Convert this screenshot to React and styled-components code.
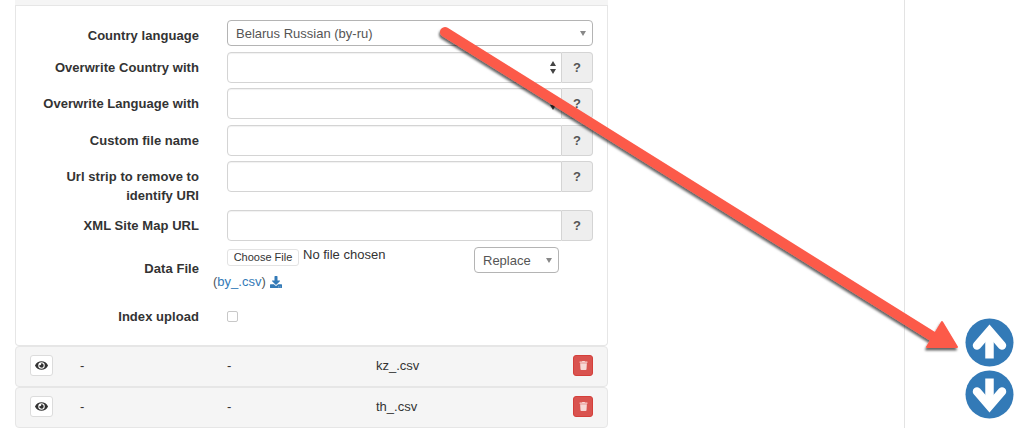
import React from 'react';
import styled, { createGlobalStyle } from 'styled-components';
import { FaEye, FaTrash, FaDownload } from 'react-icons/fa';

const Global = createGlobalStyle`
    html, body { margin: 0; padding: 0; background: #fff; }
    body { font-family: "Liberation Sans", Arial, sans-serif; font-size: 13px; color: #333; }
`;

const Page = styled.div`
    position: relative;
    width: 1024px;
    height: 428px;
    overflow: hidden;
    display: flex;
    padding-left: 15px;
    box-sizing: border-box;
`;

const Main = styled.div`
    width: 593px;
    flex: none;
`;

const Panel = styled.div`
    box-sizing: border-box;
    height: 340px;
    border: 1px solid #e6e6e6;
    border-top: none;
    border-radius: 0 0 4px 4px;
`;

const PanelHead = styled.div`
    height: 5px;
    background: #f5f5f5;
    border-bottom: 1px solid #e6e6e6;
`;

const Form = styled.div`
    display: flex;
    flex-direction: column;
    padding: 14px 14px 0 0;
`;

const Row = styled.div`
    display: grid;
    grid-template-columns: 183px 366px;
    column-gap: 28px;
    align-items: ${p => (p.$top ? 'start' : 'center')};
    margin-bottom: ${p => p.$gap || 5.5}px;
`;

const Label = styled.label`
    font-weight: 700;
    font-size: 13px;
    letter-spacing: 0.05px;
    line-height: 19px;
    text-align: right;
    color: #333;
    padding-top: ${p => p.$down || 0}px;
    padding-bottom: ${p => p.$up || 0}px;
    padding-left: ${p => p.$inset || 0}px;
`;

const SelectWrap = styled.div`
    position: relative;
    width: ${p => p.$width || '100%'};
`;

const Select = styled.select`
    appearance: none;
    display: block;
    box-sizing: border-box;
    width: 100%;
    height: 26px;
    padding: 0 8px;
    background: #fff;
    border: 1px solid #b4b4b4;
    border-radius: 4px;
    font: 13px "Liberation Sans", Arial, sans-serif;
    color: #555;
`;

const Caret = styled.span`
    position: absolute;
    right: 7px;
    top: 11px;
    border-left: 3.5px solid transparent;
    border-right: 3.5px solid transparent;
    border-top: 5px solid #888;
`;

const Group = styled.div`
    display: flex;
    height: 31px;
`;

const InputBox = styled.div`
    position: relative;
    flex: 1;
`;

const Input = styled.input`
    display: block;
    box-sizing: border-box;
    width: 100%;
    height: 31px;
    border: 1px solid #d4d4d4;
    border-radius: 4px 0 0 4px;
    background: #fff;
    box-shadow: inset 0 1px 1px rgba(0, 0, 0, 0.06);
    outline: none;
`;

const Spinner = styled.svg`
    position: absolute;
    right: 5px;
    top: 8px;
`;

const Help = styled.div`
    width: 31px;
    box-sizing: border-box;
    display: flex;
    align-items: center;
    justify-content: center;
    background: #eee;
    border: 1px solid #d4d4d4;
    border-left: none;
    border-radius: 0 4px 4px 0;
    font-weight: 700;
    font-size: 13px;
    color: #555;
`;

const FileCell = styled.div`
    display: grid;
    grid-template-columns: 1fr 85px;
    margin-left: -14px;
    padding-right: 34px;
`;

const FileLine = styled.div`
    display: flex;
    align-items: flex-start;
    padding-left: 14px;
`;

const FileButton = styled.div`
    box-sizing: border-box;
    width: 72px;
    height: 17px;
    margin-top: 2px;
    border: 1px solid #e3e3e3;
    border-radius: 3px;
    background: #fff;
    font-size: 11px;
    line-height: 15px;
    text-align: center;
    color: #333;
`;

const NoFile = styled.span`
    margin-left: 4px;
    font-size: 13px;
    line-height: 15px;
    color: #333;
`;

const DataLink = styled.div`
    grid-column: 1 / span 2;
    margin-top: -1px;
    font-size: 13px;
    line-height: 19px;
    color: #555;
    display: flex;
    align-items: center;
`;

const LinkText = styled.a`
    color: #337ab7;
    text-decoration: none;
`;

const Download = styled(FaDownload)`
    margin-left: 4px;
    font-size: 12px;
    color: #337ab7;
`;

const Check = styled.input`
    appearance: none;
    display: block;
    box-sizing: border-box;
    margin: 0;
    width: 11px;
    height: 11px;
    background: #fff;
    border: 1px solid #c8c8c8;
    border-radius: 2px;
`;

const ListRow = styled.div`
    box-sizing: border-box;
    height: 41px;
    display: grid;
    grid-template-columns: 50px 147px 149px 1fr auto;
    align-items: center;
    padding: 0 14px 2px;
    background: #f5f5f5;
    border: 1px solid #e6e6e6;
    border-radius: 4px;
    font-size: 13px;
    color: #333;
`;

const EyeButton = styled.button`
    box-sizing: border-box;
    width: 23px;
    height: 21px;
    padding: 0;
    display: flex;
    align-items: center;
    justify-content: center;
    background: #fff;
    border: 1px solid #dcdcdc;
    border-radius: 3px;
    color: #333;
    font-size: 13px;
`;

const TrashButton = styled.button`
    box-sizing: border-box;
    width: 20px;
    height: 21px;
    padding: 0;
    display: flex;
    align-items: center;
    justify-content: center;
    background: #d9534f;
    border: 1px solid #d43f3a;
    border-radius: 3px;
    color: #f7d8d6;
    font-size: 9px;
`;

const Rail = styled.div`
    box-sizing: border-box;
    flex: none;
    width: 120px;
    margin-left: 296px;
    height: 428px;
    border-left: 1px solid #e3e3e3;
    display: flex;
    flex-direction: column;
    align-items: flex-end;
    padding: 318px 10px 0 0;
    gap: 3px;
`;

const Overlay = styled.svg`
    position: absolute;
    left: 0;
    top: 0;
    pointer-events: none;
`;

const CircleIcon = styled.svg`
    display: block;
    width: 49px;
    height: 49px;
`;

// the arrow is drawn pointing up, the down one is the same drawing turned round
const MoveIcon = ({ down }) => (
    <CircleIcon viewBox="-24.5 -24.5 49 49">
        <circle r="24" fill="#337ab7" />
        <g transform={down ? 'rotate(180)' : undefined} fill="none" stroke="#fff" strokeWidth="8.5">
            <path d="M0 16 V-11" />
            <path d="M-12.5 3 L0 -11.5 L12.5 3" strokeLinejoin="miter" strokeLinecap="round" />
        </g>
    </CircleIcon>
);

const Arrow = () => (
    <Overlay width="1024" height="428" viewBox="0 0 1024 428">
        <defs>
            <filter id="sh" x="-5%" y="-5%" width="110%" height="110%">
                <feDropShadow dx="-1" dy="2.5" stdDeviation="1" floodColor="#000" floodOpacity="0.6" />
            </filter>
        </defs>
        <g filter="url(#sh)" fill="#fc5a4a" stroke="#fc5a4a" strokeLinejoin="round">
            <path d="M445 32 L940 341" fill="none" strokeWidth="10" strokeLinecap="round" />
            <path d="M942 322 L957 347 L927 347 Z" strokeWidth="2" />
        </g>
    </Overlay>
);

const Spin = () => (
    <Spinner width="8" height="16" viewBox="0 0 8 16">
        <path d="M4 1 L7 6 L1 6 Z M1 9 L7 9 L4 14 Z" fill="#444" />
    </Spinner>
);

const fields = [
    { label: 'Overwrite Country with', spin: true },
    { label: 'Overwrite Language with', spin: true },
    { label: 'Custom file name' },
];

const FieldGroup = ({ spin }) => (
    <Group>
        <InputBox>
            <Input />
            {spin ? <Spin /> : null}
        </InputBox>
        <Help>?</Help>
    </Group>
);

const files = ['kz_.csv', 'th_.csv'];

export default function App() {
    return (
        <Page>
            <Global />
            <Main>
                <PanelHead />
                <Panel>
                    <Form>
                        <Row>
                            <Label $down={4}>Country language</Label>
                            <SelectWrap>
                                <Select defaultValue="by-ru">
                                    <option value="by-ru">Belarus Russian (by-ru)</option>
                                </Select>
                                <Caret />
                            </SelectWrap>
                        </Row>
                        {fields.map(f => (
                            <Row key={f.label}>
                                <Label>{f.label}</Label>
                                <FieldGroup spin={f.spin} />
                            </Row>
                        ))}
                        <Row $top $gap={5}>
                            <Label $down={6} $inset={40}>Url strip to remove to identify URI</Label>
                            <FieldGroup />
                        </Row>
                        <Row $gap={6}>
                            <Label>XML Site Map URL</Label>
                            <FieldGroup />
                        </Row>
                        <Row $gap={16}>
                            <Label $up={2}>Data File</Label>
                            <FileCell>
                                <FileLine>
                                    <FileButton>Choose File</FileButton>
                                    <NoFile>No file chosen</NoFile>
                                </FileLine>
                                <SelectWrap $width="85px">
                                    <Select defaultValue="replace">
                                        <option value="replace">Replace</option>
                                    </Select>
                                    <Caret />
                                </SelectWrap>
                                <DataLink>
                                    (<LinkText>by_.csv</LinkText>)<Download />
                                </DataLink>
                            </FileCell>
                        </Row>
                        <Row>
                            <Label>Index upload</Label>
                            <Check type="checkbox" />
                        </Row>
                    </Form>
                </Panel>
                {files.map(name => (
                    <ListRow key={name}>
                        <EyeButton><FaEye /></EyeButton>
                        <span>-</span>
                        <span>-</span>
                        <span>{name}</span>
                        <TrashButton><FaTrash /></TrashButton>
                    </ListRow>
                ))}
            </Main>
            <Rail>
                <MoveIcon />
                <MoveIcon down />
            </Rail>
            <Arrow />
        </Page>
    );
}
